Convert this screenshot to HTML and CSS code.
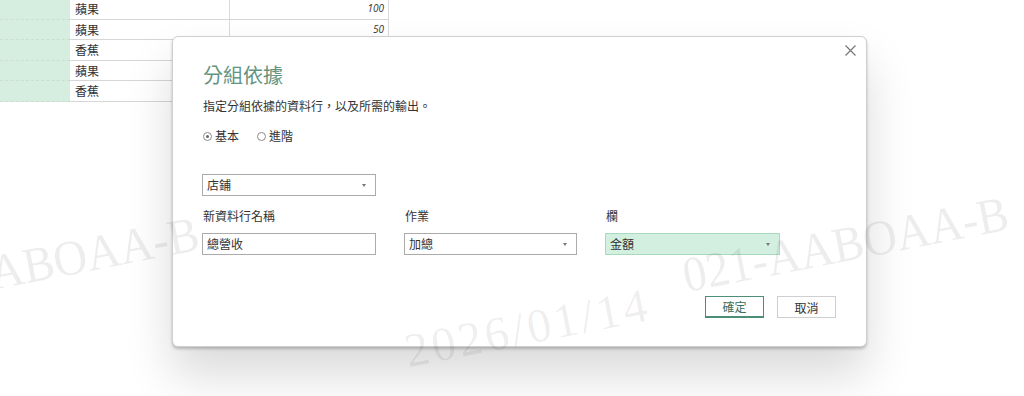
FILE: index.html
```html
<!DOCTYPE html>
<html lang="zh-Hant">
<head>
  <meta charset="UTF-8" />
  <title>分組依據</title>
  <link rel="stylesheet" href="styles.css">
</head>
<body>
  <div class="sheet">
    <div class="row"><div class="key"></div><div class="cell">蘋果</div><div class="cell num">100</div></div>
    <div class="row"><div class="key"></div><div class="cell">蘋果</div><div class="cell num">50</div></div>
    <div class="row"><div class="key"></div><div class="cell">香蕉</div><div class="cell num"></div></div>
    <div class="row"><div class="key"></div><div class="cell">蘋果</div><div class="cell num"></div></div>
    <div class="row"><div class="key"></div><div class="cell">香蕉</div><div class="cell num"></div></div>
  </div>

  <div class="dialog">
    <button class="close" aria-label="關閉">
      <svg width="11" height="11" viewBox="0 0 11 11"><path d="M0.5 0.5 L10.5 10.5 M10.5 0.5 L0.5 10.5" stroke="#777" stroke-width="1.2" fill="none"/></svg>
    </button>
    <h1 class="title">分組依據</h1>
    <p class="desc">指定分組依據的資料行，以及所需的輸出。</p>
    <div class="radios">
      <label class="radio"><span class="dot on"></span>基本</label>
      <label class="radio"><span class="dot"></span>進階</label>
    </div>

    <div class="select first">店鋪<span class="caret"></span></div>

    <div class="fields">
      <div class="label">新資料行名稱</div>
      <div class="label">作業</div>
      <div class="label">欄</div>
      <div class="input">總營收</div>
      <div class="select">加總<span class="caret"></span></div>
      <div class="select green">金額<span class="caret"></span></div>
    </div>

    <div class="actions">
      <button class="btn primary">確定</button>
      <button class="btn">取消</button>
    </div>
  </div>

  <div class="watermark">
    <span class="wm code left">AABOAA-B</span>
    <span class="wm date">2026/01/14</span>
    <span class="wm code right">021-AABOAA-B</span>
  </div>
</body>
</html>
```

FILE: styles.css
```css
body { margin: 0; background: #fff; font-family: "Noto Sans CJK TC", "Noto Sans", sans-serif; font-size: 12px; color: #333; height: 396px; overflow: hidden; position: relative; }

/* hoja de fondo */
.sheet { margin-top: -1px; width: 389px; }
.row { display: grid; grid-template-columns: 70px 160px 159px; height: 19.5px; border-bottom: 1px solid #d6d6d6; }
.key { background: #d5eee0; border-bottom: 1px dashed #c9dfd3; margin-bottom: -1px; }
.cell { border-right: 1px solid #dadada; padding-left: 5px; line-height: 19px; color: #333; }
.num { text-align: right; padding-right: 4px; font-family: "Open Sans", sans-serif; font-style: italic; font-size: 10px; }

/* dialogo */
.dialog { position: absolute; left: 172px; top: 36px; width: 695px; background: #fff; border: 1px solid #cfcfcf; border-radius: 6px; padding: 25px 30px 28px 29px; box-sizing: border-box; box-shadow: 0 2px 3px rgba(0,0,0,0.22), 0 28px 48px rgba(0,0,0,0.15); }
.close { position: absolute; top: 7px; right: 9px; background: none; border: none; padding: 0; width: 13px; height: 13px; cursor: pointer; }
.title { margin: 0; font-size: 20px; line-height: 26px; font-weight: normal; color: #64937f; padding-left: 1px; }
.desc { margin: 9px 0 0; line-height: 18px; padding-left: 1px; }
.radios { display: flex; gap: 18px; margin-top: 12px; line-height: 18px; padding-left: 1px; }
.radio { display: flex; align-items: center; gap: 3px; }
.dot { width: 7px; height: 7px; border: 1px solid #8a8a8a; border-radius: 50%; position: relative; }
.dot.on::after { content: ""; position: absolute; left: 2px; top: 2px; width: 3px; height: 3px; border-radius: 50%; background: #666; }

.select, .input { height: 22px; box-sizing: border-box; border: 1px solid #ababab; padding-left: 4px; line-height: 20px; color: #333; display: flex; justify-content: space-between; align-items: center; }
.select.first { width: 174px; margin-top: 29px; }
.select.green { background: #d3efdf; border-color: #a9dac0; }
.caret { width: 0; height: 0; border-left: 2.5px solid transparent; border-right: 2.5px solid transparent; border-top: 3px solid #777; margin-right: 9px; }

.fields { display: grid; grid-template-columns: 174px 173px 175px; column-gap: 28px; row-gap: 8px; margin-top: 11px; }
.label { line-height: 18px; padding-left: 1px; }

.actions { display: flex; justify-content: flex-end; gap: 13px; margin-top: 41px; }
.btn { width: 59px; height: 22px; box-sizing: border-box; background: #fff; border: 1px solid #cfcfcf; font-family: inherit; font-size: 12px; color: #333; padding: 0; }
.btn.primary { border-color: #4d8f76; border-bottom-width: 2px; color: #3c6f5e; }

/* marca de agua */
.watermark { position: absolute; inset: 0; pointer-events: none; overflow: hidden; }
.wm { position: absolute; font-family: "Liberation Serif", serif; font-size: 50px; line-height: 50px; color: rgba(0,0,0,0.07); white-space: nowrap; transform-origin: left bottom; }
.wm.code { transform: rotate(-11deg) scaleX(0.93); }
.wm.date { left: 410px; top: 326px; font-size: 48px; letter-spacing: 3px; transform: rotate(-11deg); }
.wm.left { left: -38px; top: 254px; }
.wm.right { left: 688px; top: 250px; }
```
